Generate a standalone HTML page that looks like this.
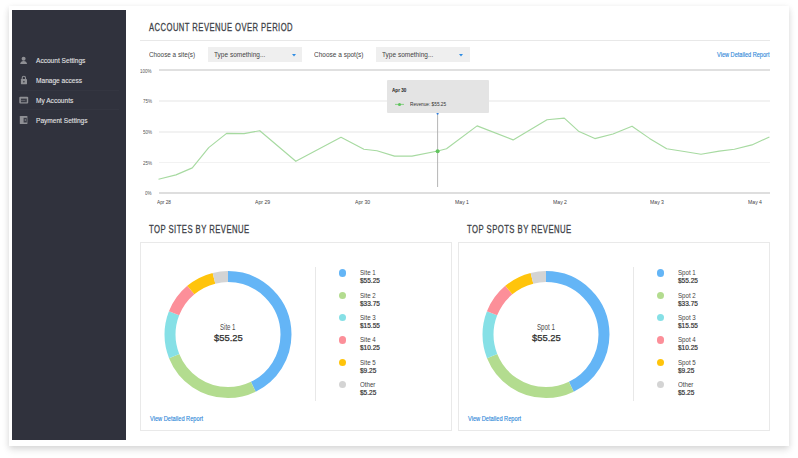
<!DOCTYPE html><html><head><meta charset="utf-8"><style>
*{margin:0;padding:0;box-sizing:border-box}
html,body{width:798px;height:458px;overflow:hidden;background:#fff;font-family:"Liberation Sans",sans-serif}
.t{position:absolute;white-space:nowrap;transform-origin:0 0}
.a{position:absolute}
</style></head><body>
<div class="a" style="left:9px;top:6px;width:780px;height:440px;background:#fff;box-shadow:0 2px 6px rgba(0,0,0,0.13),0 5px 9px rgba(0,0,0,0.06)"></div>
<div class="a" style="left:12px;top:10px;width:114px;height:430px;background:#30323d"></div>
<div class="a" style="left:18px;top:90px;width:101px;height:1px;background:#343641"></div>
<div class="a" style="left:18px;top:109px;width:101px;height:1px;background:#343641"></div>
<div class="t" style="left:35.60px;top:56.52px;font-size:7.41px;line-height:7.41px;color:#e4e4e6;font-weight:normal;transform:scaleX(0.8879);-webkit-text-stroke:0.1px #e4e4e6;">Account Settings</div>
<div class="t" style="left:35.60px;top:76.62px;font-size:7.41px;line-height:7.41px;color:#e4e4e6;font-weight:normal;transform:scaleX(0.8879);-webkit-text-stroke:0.1px #e4e4e6;">Manage access</div>
<div class="t" style="left:35.60px;top:97.12px;font-size:7.41px;line-height:7.41px;color:#e4e4e6;font-weight:normal;transform:scaleX(0.8879);-webkit-text-stroke:0.1px #e4e4e6;">My Accounts</div>
<div class="t" style="left:35.60px;top:117.02px;font-size:7.41px;line-height:7.41px;color:#e4e4e6;font-weight:normal;transform:scaleX(0.8879);-webkit-text-stroke:0.1px #e4e4e6;">Payment Settings</div>
<svg class="a" style="left:0;top:0" width="130" height="130"><circle cx="23.6" cy="58.7" r="2" fill="#8f9095"/><path d="M20.1 64Q20.6 61 23.6 61Q26.6 61 27.1 64Z" fill="#8f9095"/><path d="M22.2 79.2V77.9A1.65 1.65 0 0 1 25.5 77.9V79.2" stroke="#8f9095" stroke-width="1.1" fill="none"/><rect x="20.9" y="79" width="6.1" height="5.2" rx="0.4" fill="#8f9095"/><circle cx="23.9" cy="81.4" r="0.6" fill="#30323d"/><rect x="23.6" y="81.4" width="0.6" height="1.4" fill="#30323d"/><rect x="19.3" y="96.7" width="8.9" height="6.9" rx="1" fill="#8f9095"/><rect x="20.9" y="98.6" width="5.9" height="3.7" fill="#3a3c46"/><rect x="20.9" y="100.1" width="4.4" height="0.7" fill="#6d6e74"/><rect x="19.8" y="115.9" width="7.6" height="8.1" rx="0.6" fill="#8f9095"/><rect x="23.6" y="117.8" width="3.2" height="4.7" fill="#3a3c46"/><circle cx="25.3" cy="120" r="0.7" fill="#8f9095"/></svg>
<div class="t" style="left:149.00px;top:22.79px;font-size:7.65px;letter-spacing:0.45px;line-height:7.65px;color:#3d3f47;font-weight:normal;transform:scaleY(1.3298);-webkit-text-stroke:0.2px #3d3f47;">ACCOUNT REVENUE OVER PERIOD</div>
<div class="a" style="left:140px;top:40px;width:630px;height:1px;background:#e8e8e8"></div>
<div class="t" style="left:148.80px;top:52.07px;font-size:7.12px;line-height:7.12px;color:#444;font-weight:normal;transform:scaleX(0.8910);">Choose a site(s)</div>
<div class="a" style="left:208px;top:47px;width:94px;height:14.5px;background:#efefef"></div>
<div class="t" style="left:214.40px;top:51.97px;font-size:7.12px;line-height:7.12px;color:#444;font-weight:normal;transform:scaleX(0.9141);">Type something...</div>
<div class="t" style="left:314.00px;top:52.07px;font-size:7.12px;line-height:7.12px;color:#444;font-weight:normal;transform:scaleX(0.9145);">Choose a spot(s)</div>
<div class="a" style="left:376px;top:47px;width:93.5px;height:14.5px;background:#efefef"></div>
<div class="t" style="left:382.20px;top:51.97px;font-size:7.12px;line-height:7.12px;color:#444;font-weight:normal;transform:scaleX(0.9141);">Type something...</div>
<svg class="a" style="left:291.6px;top:53.5px" width="4" height="3"><path d="M0 0H4L2 2.5Z" fill="#2f8de4"/></svg>
<svg class="a" style="left:459.2px;top:53.5px" width="4" height="3"><path d="M0 0H4L2 2.5Z" fill="#2f8de4"/></svg>
<div class="t" style="left:716.80px;top:52.06px;font-size:6.54px;line-height:6.54px;color:#2b86d8;font-weight:normal;transform:scaleX(0.8578);-webkit-text-stroke:0.12px #2b86d8;">View Detailed Report</div>
<div class="a" style="left:158.5px;top:69.20px;width:611.5px;height:1.6px;background:#e0e0e0"></div>
<div class="t" style="left:140.39px;top:68.80px;font-size:5.67px;line-height:5.67px;color:#555;font-weight:normal;transform:scaleX(0.8000);">100%</div>
<div class="a" style="left:158.5px;top:100.25px;width:611.5px;height:1.5px;background:#f2f2f2"></div>
<div class="t" style="left:142.93px;top:99.20px;font-size:5.67px;line-height:5.67px;color:#555;font-weight:normal;transform:scaleX(0.8000);">75%</div>
<div class="a" style="left:158.5px;top:131.05px;width:611.5px;height:1.5px;background:#f2f2f2"></div>
<div class="t" style="left:142.93px;top:130.00px;font-size:5.67px;line-height:5.67px;color:#555;font-weight:normal;transform:scaleX(0.8000);">50%</div>
<div class="a" style="left:158.5px;top:161.85px;width:611.5px;height:1.5px;background:#f2f2f2"></div>
<div class="t" style="left:142.93px;top:160.80px;font-size:5.67px;line-height:5.67px;color:#555;font-weight:normal;transform:scaleX(0.8000);">25%</div>
<div class="a" style="left:158.5px;top:192.00px;width:611.5px;height:1.8px;background:#dedede"></div>
<div class="t" style="left:145.45px;top:191.10px;font-size:5.67px;line-height:5.67px;color:#555;font-weight:normal;transform:scaleX(0.8000);">0%</div>
<div class="t" style="left:156.90px;top:199.62px;font-size:5.52px;line-height:5.52px;color:#3f3f3f;font-weight:normal;transform:scaleX(0.8545);">Apr 28</div>
<div class="t" style="left:255.14px;top:199.62px;font-size:5.52px;line-height:5.52px;color:#3f3f3f;font-weight:normal;transform:scaleX(0.9300);">Apr 29</div>
<div class="t" style="left:355.24px;top:199.62px;font-size:5.52px;line-height:5.52px;color:#3f3f3f;font-weight:normal;transform:scaleX(0.9300);">Apr 30</div>
<div class="t" style="left:454.60px;top:199.62px;font-size:5.52px;line-height:5.52px;color:#3f3f3f;font-weight:normal;transform:scaleX(0.9300);">May 1</div>
<div class="t" style="left:552.50px;top:199.62px;font-size:5.52px;line-height:5.52px;color:#3f3f3f;font-weight:normal;transform:scaleX(0.9300);">May 2</div>
<div class="t" style="left:650.30px;top:199.62px;font-size:5.52px;line-height:5.52px;color:#3f3f3f;font-weight:normal;transform:scaleX(0.9300);">May 3</div>
<div class="t" style="left:748.20px;top:199.62px;font-size:5.52px;line-height:5.52px;color:#3f3f3f;font-weight:normal;transform:scaleX(0.9300);">May 4</div>
<svg class="a" style="left:0;top:0" width="798" height="458"><polyline points="158.5,179.2 176.0,174.9 192.3,167.9 208.7,147.6 226.6,133.4 244.1,133.6 259.8,130.7 295.8,161.3 341.0,137.3 363.9,149.3 377.0,150.8 394.5,156.1 412.0,156.1 437.8,151.0 446.5,148.7 477.1,125.9 513.1,139.9 547.0,119.8 564.3,118.1 578.5,131.2 594.9,138.6 613.0,134.0 632.0,126.2 649.5,138.4 666.7,148.7 684.2,151.5 701.0,154.3 719.2,151.1 734.4,149.3 751.9,144.9 769.4,136.9" fill="none" stroke="#a7daa1" stroke-width="1.15" stroke-linejoin="round"/><line x1="437.6" y1="113.4" x2="437.6" y2="187" stroke="#adadad" stroke-width="0.9"/><circle cx="437.6" cy="151.3" r="2" fill="#62c55f"/><circle cx="437.6" cy="113.6" r="1.1" fill="#2f7fe0"/></svg>
<div class="a" style="left:387px;top:80.3px;width:101.6px;height:32.8px;background:#e4e4e4;border-radius:1px"></div>
<div class="t" style="left:392.30px;top:87.67px;font-size:5.23px;line-height:5.23px;color:#222;font-weight:bold;transform:scaleX(0.8849);">Apr 30</div>
<svg class="a" style="left:394px;top:102px" width="12" height="5"><line x1="1" y1="2.4" x2="10" y2="2.4" stroke="#7ccd78" stroke-width="0.9"/><circle cx="5.5" cy="2.4" r="1.5" fill="#5cc25a"/></svg>
<div class="t" style="left:410.00px;top:101.57px;font-size:5.23px;line-height:5.23px;color:#333;font-weight:normal;transform:scaleX(0.9085);">Revenue: $55.25</div>
<div class="t" style="left:149.00px;top:224.79px;font-size:7.71px;letter-spacing:0.45px;line-height:7.71px;color:#3d3f47;font-weight:normal;transform:scaleY(1.3191);-webkit-text-stroke:0.2px #3d3f47;">TOP SITES BY REVENUE</div>
<div class="a" style="left:140px;top:242px;width:312px;height:189px;border:1px solid #e9e9e9"></div>
<svg class="a" style="left:158px;top:264px" width="140" height="140"><circle cx="70" r="58" fill="none" stroke="#64b5f6" stroke-width="11" stroke-dasharray="155.719 364.425" stroke-dashoffset="0.000" transform="rotate(-90 70 70.6)" cy="70.6"/><circle cx="70" r="58" fill="none" stroke="#b3dc8f" stroke-width="11" stroke-dasharray="95.122 364.425" stroke-dashoffset="-155.719" transform="rotate(-90 70 70.6)" cy="70.6"/><circle cx="70" r="58" fill="none" stroke="#86e0e6" stroke-width="11" stroke-dasharray="43.827 364.425" stroke-dashoffset="-250.841" transform="rotate(-90 70 70.6)" cy="70.6"/><circle cx="70" r="58" fill="none" stroke="#fc8f99" stroke-width="11" stroke-dasharray="28.889 364.425" stroke-dashoffset="-294.668" transform="rotate(-90 70 70.6)" cy="70.6"/><circle cx="70" r="58" fill="none" stroke="#ffc40b" stroke-width="11" stroke-dasharray="26.071 364.425" stroke-dashoffset="-323.557" transform="rotate(-90 70 70.6)" cy="70.6"/><circle cx="70" r="58" fill="none" stroke="#d4d4d4" stroke-width="11" stroke-dasharray="14.797 364.425" stroke-dashoffset="-349.628" transform="rotate(-90 70 70.6)" cy="70.6"/></svg>
<div class="t" style="left:219.75px;top:323.71px;font-size:8.14px;line-height:8.14px;color:#4a4a4a;font-weight:normal;transform:scaleX(0.7453);">Site 1</div>
<div class="t" style="left:213.55px;top:333.38px;font-size:9.59px;line-height:9.59px;color:#2e2e2e;font-weight:normal;transform:scaleX(0.9845);-webkit-text-stroke:0.25px #2e2e2e;">$55.25</div>
<div class="a" style="left:315px;top:266.6px;width:1px;height:134px;background:#e8e8e8"></div>
<div class="a" style="left:338.5px;top:269.20px;width:7.4px;height:7.4px;border-radius:50%;background:#64b5f6"></div>
<div class="t" style="left:360.10px;top:270.24px;font-size:6.69px;line-height:6.69px;color:#444;font-weight:normal;transform:scaleX(0.9200);">Site 1</div>
<div class="t" style="left:360.10px;top:278.24px;font-size:6.69px;line-height:6.69px;color:#333;font-weight:normal;transform:scaleX(0.9700);-webkit-text-stroke:0.2px #333;">$55.25</div>
<div class="a" style="left:338.5px;top:291.55px;width:7.4px;height:7.4px;border-radius:50%;background:#b3dc8f"></div>
<div class="t" style="left:360.10px;top:292.59px;font-size:6.69px;line-height:6.69px;color:#444;font-weight:normal;transform:scaleX(0.9200);">Site 2</div>
<div class="t" style="left:360.10px;top:300.59px;font-size:6.69px;line-height:6.69px;color:#333;font-weight:normal;transform:scaleX(0.9700);-webkit-text-stroke:0.2px #333;">$33.75</div>
<div class="a" style="left:338.5px;top:313.90px;width:7.4px;height:7.4px;border-radius:50%;background:#86e0e6"></div>
<div class="t" style="left:360.10px;top:314.94px;font-size:6.69px;line-height:6.69px;color:#444;font-weight:normal;transform:scaleX(0.9200);">Site 3</div>
<div class="t" style="left:360.10px;top:322.94px;font-size:6.69px;line-height:6.69px;color:#333;font-weight:normal;transform:scaleX(0.9700);-webkit-text-stroke:0.2px #333;">$15.55</div>
<div class="a" style="left:338.5px;top:336.25px;width:7.4px;height:7.4px;border-radius:50%;background:#fc8f99"></div>
<div class="t" style="left:360.10px;top:337.29px;font-size:6.69px;line-height:6.69px;color:#444;font-weight:normal;transform:scaleX(0.9200);">Site 4</div>
<div class="t" style="left:360.10px;top:345.29px;font-size:6.69px;line-height:6.69px;color:#333;font-weight:normal;transform:scaleX(0.9700);-webkit-text-stroke:0.2px #333;">$10.25</div>
<div class="a" style="left:338.5px;top:358.60px;width:7.4px;height:7.4px;border-radius:50%;background:#ffc40b"></div>
<div class="t" style="left:360.10px;top:359.64px;font-size:6.69px;line-height:6.69px;color:#444;font-weight:normal;transform:scaleX(0.9200);">Site 5</div>
<div class="t" style="left:360.10px;top:367.64px;font-size:6.69px;line-height:6.69px;color:#333;font-weight:normal;transform:scaleX(0.9700);-webkit-text-stroke:0.2px #333;">$9.25</div>
<div class="a" style="left:338.5px;top:380.95px;width:7.4px;height:7.4px;border-radius:50%;background:#d4d4d4"></div>
<div class="t" style="left:360.10px;top:381.99px;font-size:6.69px;line-height:6.69px;color:#444;font-weight:normal;transform:scaleX(0.9200);">Other</div>
<div class="t" style="left:360.10px;top:389.99px;font-size:6.69px;line-height:6.69px;color:#333;font-weight:normal;transform:scaleX(0.9700);-webkit-text-stroke:0.2px #333;">$5.25</div>
<div class="t" style="left:150.30px;top:415.56px;font-size:6.54px;line-height:6.54px;color:#2b86d8;font-weight:normal;transform:scaleX(0.8676);-webkit-text-stroke:0.12px #2b86d8;">View Detailed Report</div>
<div class="t" style="left:467.00px;top:224.79px;font-size:7.73px;letter-spacing:0.45px;line-height:7.73px;color:#3d3f47;font-weight:normal;transform:scaleY(1.3157);-webkit-text-stroke:0.2px #3d3f47;">TOP SPOTS BY REVENUE</div>
<div class="a" style="left:458px;top:242px;width:312px;height:189px;border:1px solid #e9e9e9"></div>
<svg class="a" style="left:476px;top:264px" width="140" height="140"><circle cx="70" r="58" fill="none" stroke="#64b5f6" stroke-width="11" stroke-dasharray="155.719 364.425" stroke-dashoffset="0.000" transform="rotate(-90 70 70.6)" cy="70.6"/><circle cx="70" r="58" fill="none" stroke="#b3dc8f" stroke-width="11" stroke-dasharray="95.122 364.425" stroke-dashoffset="-155.719" transform="rotate(-90 70 70.6)" cy="70.6"/><circle cx="70" r="58" fill="none" stroke="#86e0e6" stroke-width="11" stroke-dasharray="43.827 364.425" stroke-dashoffset="-250.841" transform="rotate(-90 70 70.6)" cy="70.6"/><circle cx="70" r="58" fill="none" stroke="#fc8f99" stroke-width="11" stroke-dasharray="28.889 364.425" stroke-dashoffset="-294.668" transform="rotate(-90 70 70.6)" cy="70.6"/><circle cx="70" r="58" fill="none" stroke="#ffc40b" stroke-width="11" stroke-dasharray="26.071 364.425" stroke-dashoffset="-323.557" transform="rotate(-90 70 70.6)" cy="70.6"/><circle cx="70" r="58" fill="none" stroke="#d4d4d4" stroke-width="11" stroke-dasharray="14.797 364.425" stroke-dashoffset="-349.628" transform="rotate(-90 70 70.6)" cy="70.6"/></svg>
<div class="t" style="left:536.55px;top:323.71px;font-size:8.14px;line-height:8.14px;color:#4a4a4a;font-weight:normal;transform:scaleX(0.7609);">Spot 1</div>
<div class="t" style="left:531.55px;top:333.38px;font-size:9.59px;line-height:9.59px;color:#2e2e2e;font-weight:normal;transform:scaleX(0.9845);-webkit-text-stroke:0.25px #2e2e2e;">$55.25</div>
<div class="a" style="left:633px;top:266.6px;width:1px;height:134px;background:#e8e8e8"></div>
<div class="a" style="left:656.5px;top:269.20px;width:7.4px;height:7.4px;border-radius:50%;background:#64b5f6"></div>
<div class="t" style="left:678.10px;top:270.24px;font-size:6.69px;line-height:6.69px;color:#444;font-weight:normal;transform:scaleX(0.9200);">Spot 1</div>
<div class="t" style="left:678.10px;top:278.24px;font-size:6.69px;line-height:6.69px;color:#333;font-weight:normal;transform:scaleX(0.9700);-webkit-text-stroke:0.2px #333;">$55.25</div>
<div class="a" style="left:656.5px;top:291.55px;width:7.4px;height:7.4px;border-radius:50%;background:#b3dc8f"></div>
<div class="t" style="left:678.10px;top:292.59px;font-size:6.69px;line-height:6.69px;color:#444;font-weight:normal;transform:scaleX(0.9200);">Spot 2</div>
<div class="t" style="left:678.10px;top:300.59px;font-size:6.69px;line-height:6.69px;color:#333;font-weight:normal;transform:scaleX(0.9700);-webkit-text-stroke:0.2px #333;">$33.75</div>
<div class="a" style="left:656.5px;top:313.90px;width:7.4px;height:7.4px;border-radius:50%;background:#86e0e6"></div>
<div class="t" style="left:678.10px;top:314.94px;font-size:6.69px;line-height:6.69px;color:#444;font-weight:normal;transform:scaleX(0.9200);">Spot 3</div>
<div class="t" style="left:678.10px;top:322.94px;font-size:6.69px;line-height:6.69px;color:#333;font-weight:normal;transform:scaleX(0.9700);-webkit-text-stroke:0.2px #333;">$15.55</div>
<div class="a" style="left:656.5px;top:336.25px;width:7.4px;height:7.4px;border-radius:50%;background:#fc8f99"></div>
<div class="t" style="left:678.10px;top:337.29px;font-size:6.69px;line-height:6.69px;color:#444;font-weight:normal;transform:scaleX(0.9200);">Spot 4</div>
<div class="t" style="left:678.10px;top:345.29px;font-size:6.69px;line-height:6.69px;color:#333;font-weight:normal;transform:scaleX(0.9700);-webkit-text-stroke:0.2px #333;">$10.25</div>
<div class="a" style="left:656.5px;top:358.60px;width:7.4px;height:7.4px;border-radius:50%;background:#ffc40b"></div>
<div class="t" style="left:678.10px;top:359.64px;font-size:6.69px;line-height:6.69px;color:#444;font-weight:normal;transform:scaleX(0.9200);">Spot 5</div>
<div class="t" style="left:678.10px;top:367.64px;font-size:6.69px;line-height:6.69px;color:#333;font-weight:normal;transform:scaleX(0.9700);-webkit-text-stroke:0.2px #333;">$9.25</div>
<div class="a" style="left:656.5px;top:380.95px;width:7.4px;height:7.4px;border-radius:50%;background:#d4d4d4"></div>
<div class="t" style="left:678.10px;top:381.99px;font-size:6.69px;line-height:6.69px;color:#444;font-weight:normal;transform:scaleX(0.9200);">Other</div>
<div class="t" style="left:678.10px;top:389.99px;font-size:6.69px;line-height:6.69px;color:#333;font-weight:normal;transform:scaleX(0.9700);-webkit-text-stroke:0.2px #333;">$5.25</div>
<div class="t" style="left:468.30px;top:415.56px;font-size:6.54px;line-height:6.54px;color:#2b86d8;font-weight:normal;transform:scaleX(0.8676);-webkit-text-stroke:0.12px #2b86d8;">View Detailed Report</div>
</body></html>
